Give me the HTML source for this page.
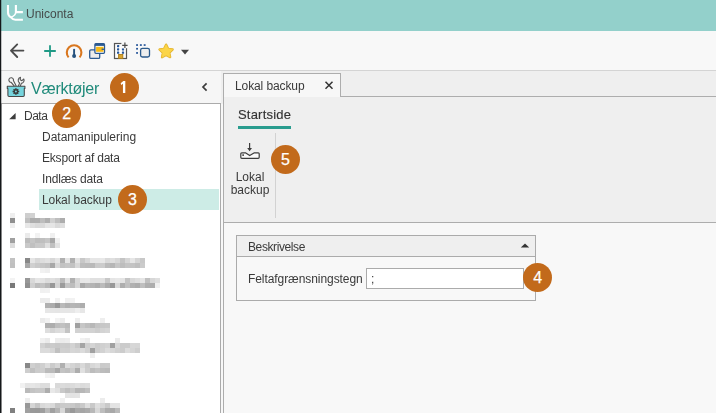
<!DOCTYPE html>
<html>
<head>
<meta charset="utf-8">
<style>
html,body{margin:0;padding:0;}
body{width:716px;height:413px;overflow:hidden;position:relative;background:#f8f8f8;font-family:"Liberation Sans",sans-serif;font-size:12px;color:#333;}
.abs{position:absolute;}
.t{will-change:transform;position:absolute;white-space:nowrap;line-height:14px;color:#3a3a3a;}
#title{left:0;top:0;width:716px;height:31px;background:#93d0cb;}
#toolbar{left:0;top:31px;width:716px;height:39px;background:#f8f8f8;}
#hdr{left:0;top:70px;width:716px;height:34px;background:#f6f6f6;border-top:1px solid #d4d4d4;box-sizing:border-box;}
#tree{left:1px;top:103px;width:220px;height:320px;background:#fff;border:1px solid #ababab;box-sizing:border-box;}
#sel{left:39px;top:189px;width:180px;height:21px;background:#cdece6;}
#right{left:223px;top:96px;width:500px;height:127px;background:#efefef;border-left:1px solid #adadad;border-top:1px solid #adadad;border-bottom:1px solid #adadad;box-sizing:border-box;}
#below{left:223px;top:223px;width:500px;height:200px;background:#f8f8f8;border-left:1px solid #adadad;box-sizing:border-box;}
#tab{left:223px;top:73px;width:118px;height:24px;background:#f7f7f7;border:1px solid #adadad;border-bottom:none;box-sizing:border-box;}
.c{-webkit-text-stroke:0.25px #fff;position:absolute;width:29.5px;height:29.5px;border-radius:50%;background:#c26a1b;color:#fff;font-size:16px;line-height:29.5px;text-align:center;}
#lb{left:0;top:0;width:1px;height:413px;background:#15181a;}
#lb2{left:1px;top:0;width:1px;height:413px;background:rgba(20,24,26,0.25);}
#grp{left:236px;top:235px;width:300px;height:66px;border:1px solid #ababab;box-sizing:border-box;background:#f8f8f8;}
#grph{left:0;top:0;width:298px;height:20px;background:#efefef;border-bottom:1px solid #ababab;}
#inp{left:366px;top:268px;width:158px;height:21px;background:#fff;border:1px solid #ababab;box-sizing:border-box;}
</style>
</head>
<body>
<div id="title" class="abs"></div>
<div id="toolbar" class="abs"></div>
<div id="hdr" class="abs"></div>
<div class="abs" style="left:221px;top:71px;width:495px;height:33px;background:#efefef;"></div>
<div id="tree" class="abs"></div>
<div id="sel" class="abs"></div>
<div id="right" class="abs"></div>
<div id="below" class="abs"></div>
<div id="tab" class="abs"></div>
<div id="lb" class="abs"></div>
<div id="lb2" class="abs"></div>

<!-- title -->
<svg class="abs" style="left:0;top:0" width="30" height="26" viewBox="0 0 30 26">
 <path d="M8 4.9 V12.6 Q8 15.8 11 17.4 Q12.8 19.7 15.4 19.7 H22.9" fill="none" stroke="#fff" stroke-width="2.1"/>
 <path d="M15.9 4.9 V12.15 H22.9" fill="none" stroke="#fff" stroke-width="2.1"/>
 <path d="M15.9 12 Q15.4 15.6 11.2 17.2" fill="none" stroke="#fff" stroke-width="1.6"/>
</svg>
<div class="t" id="tt" style="left:26px;top:7px;color:#454b4b;">Uniconta</div>

<!-- toolbar icons -->
<svg class="abs" style="left:4px;top:36px" width="26" height="30" viewBox="4 36 26 30">
 <path d="M23.4 50.6 H11.4 M17.2 44.4 L11 50.6 L17.2 57" fill="none" stroke="#4c4c4c" stroke-width="1.9" stroke-linecap="round" stroke-linejoin="round"/>
</svg>
<svg class="abs" style="left:43px;top:44px" width="14" height="14" viewBox="0 0 14 14">
 <path d="M7 1.2 V12.8 M1.2 7 H12.8" fill="none" stroke="#1f9a86" stroke-width="1.8"/>
</svg>
<svg class="abs" style="left:62px;top:38px" width="70" height="26" viewBox="62 38 70 26">
 <path d="M68.6 57.4 A7.3 7.3 0 1 1 79.6 57.4" fill="none" stroke="#d9771f" stroke-width="2.1"/>
 <path d="M74.1 49.6 V55" stroke="#26527f" stroke-width="1.9" stroke-linecap="round"/>
 <circle cx="74.1" cy="55.9" r="2" fill="#26527f"/>
 <rect x="89.7" y="49.8" width="10" height="8.6" rx="1.2" fill="#ececec" stroke="#2b5a92" stroke-width="1.3"/>
 <rect x="94.9" y="43.7" width="9.6" height="9.6" rx="1" fill="#fff" stroke="#2b5a92" stroke-width="1.3"/>
 <rect x="94.9" y="43.7" width="9.6" height="2.2" fill="#2b5a92"/>
 <rect x="96.1" y="46.8" width="7.4" height="5" fill="#f6b915"/>
 <rect x="101.6" y="48.6" width="2.6" height="1.3" fill="#2b5a92"/>
 <rect x="114.5" y="43.5" width="12" height="15" fill="#fcfcfc" stroke="#555" stroke-width="1.2"/>
 <g fill="#27569a">
  <rect x="117" y="45" width="2.2" height="2.2" rx="0.4"/>
  <rect x="117" y="48.3" width="2.2" height="2.2" rx="0.4"/><rect x="121.9" y="48.3" width="2.2" height="2.2" rx="0.4"/>
  <rect x="117" y="51.6" width="2.2" height="2.2" rx="0.4"/><rect x="121.9" y="51.6" width="2.2" height="2.2" rx="0.4"/>
 </g>
 <rect x="118.6" y="54.5" width="4.2" height="4" fill="#dba42c" stroke="#a87c1e" stroke-width="0.9"/>
 <rect x="121.4" y="41" width="7.4" height="7.2" fill="#f8f8f8"/>
 <path d="M124.9 42.6 V48 M122.2 45.3 H127.6" stroke="#4a4a4a" stroke-width="1.2" fill="none"/>
</svg>
<svg class="abs" style="left:130px;top:38px" width="50" height="26" viewBox="130 38 50 26">
 <g fill="#27569a">
  <rect x="136.1" y="44.2" width="1.9" height="1.7"/><rect x="139.9" y="44.2" width="1.9" height="1.7"/><rect x="143.7" y="44.2" width="1.9" height="1.7"/>
  <rect x="136.1" y="47.9" width="1.9" height="1.7"/><rect x="136.1" y="52.1" width="1.9" height="1.7"/>
 </g>
 <rect x="140.6" y="48.4" width="8.9" height="8.6" rx="1.8" fill="#eeeeee" stroke="#2b5a8c" stroke-width="1.3"/>
 <path d="M166.10 44.60 L168.16 48.77 L172.76 49.44 L169.43 52.68 L170.21 57.26 L166.10 55.10 L161.99 57.26 L162.77 52.68 L159.44 49.44 L164.04 48.77 Z" fill="#fbd548" stroke="#e3b431" stroke-width="2.2" stroke-linejoin="round"/>
 <path d="M166.10 44.60 L168.16 48.77 L172.76 49.44 L169.43 52.68 L170.21 57.26 L166.10 55.10 L161.99 57.26 L162.77 52.68 L159.44 49.44 L164.04 48.77 Z" fill="#fbd548" stroke="#fbd548" stroke-width="0.6" stroke-linejoin="round"/>
</svg>
<svg class="abs" style="left:180px;top:49px" width="10" height="6" viewBox="0 0 10 6">
 <path d="M1 0.8 H9 L5 5.4 Z" fill="#444"/>
</svg>

<!-- panel header -->
<svg class="abs" style="left:0;top:70px" width="32" height="32" viewBox="0 70 32 32">
 <path d="M14.3 86.2 L11.2 82.3 A2.3 2.3 0 1 1 13.4 80.6 L16.2 86" fill="#f6f6f6" stroke="#555" stroke-width="1.1" stroke-linejoin="round"/>
 <path d="M18.4 86.2 L19.6 82.9 A3.1 3.1 0 0 1 20.5 77.3 L20.2 79.7 L21.9 80.7 L23.8 79 A3.1 3.1 0 0 1 21.3 83.4 L20.3 86.2" fill="#f6f6f6" stroke="#555" stroke-width="1.1" stroke-linejoin="round"/>
 <path d="M7.3 86.3 H24.9 V88.5 H24.3 V95.3 Q24.3 96.5 23.1 96.5 H9.1 Q7.9 96.5 7.9 95.3 V88.5 H7.3 Z" fill="#76d4dd" stroke="#484848" stroke-width="1.1" stroke-linejoin="round"/>
 <g stroke="#3a3a3a" stroke-width="1.5">
  <path d="M15.9 88.2 V94.8 M12.6 91.5 H19.2 M13.57 89.17 L18.23 93.83 M18.23 89.17 L13.57 93.83"/>
 </g>
 <circle cx="15.9" cy="91.5" r="2.3" fill="#3a3a3a"/>
 <circle cx="15.9" cy="91.5" r="1.0" fill="#76d4dd"/>
</svg>
<div class="t" id="vk" style="left:31px;top:80px;font-size:16px;line-height:18px;color:#1f8a7a;letter-spacing:-0.25px;">Værktøjer</div>
<svg class="abs" style="left:200px;top:80px" width="10" height="14" viewBox="200 80 10 14">
 <path d="M206.6 83.4 L203 87 L206.6 90.6" fill="none" stroke="#3c3c3c" stroke-width="1.7"/>
</svg>

<!-- tree -->
<svg class="abs" style="left:9px;top:112px" width="8" height="8" viewBox="0 0 8 8"><path d="M6.6 0.9 V7.3 H0.2 Z" fill="#3c3c3c"/></svg>
<div class="t" id="t0" style="left:24px;top:109px;letter-spacing:-0.5px;">Data</div>
<div class="t" id="t1" style="left:42px;top:130px;">Datamanipulering</div>
<div class="t" id="t2" style="left:42px;top:151px;letter-spacing:-0.2px;">Eksport af data</div>
<div class="t" id="t3" style="left:42px;top:172px;letter-spacing:-0.18px;">Indlæs data</div>
<div class="t" id="t4" style="left:42px;top:193px;letter-spacing:-0.08px;">Lokal backup</div>

<!-- MOSAIC-START -->
<svg class="abs" style="left:0;top:0" width="230" height="413" viewBox="0 0 230 413" shape-rendering="crispEdges">
<rect x="10" y="213" width="5" height="5" fill="#efefef"/>
<rect x="25" y="213" width="5" height="5" fill="#cecece"/>
<rect x="30" y="213" width="5" height="5" fill="#d2d2d2"/>
<rect x="10" y="218" width="5" height="5" fill="#8f8f8f"/>
<rect x="10" y="223" width="5" height="5" fill="#eeeeee"/>
<rect x="25" y="218" width="5" height="5" fill="#c0c0c0"/>
<rect x="30" y="218" width="5" height="5" fill="#adadad"/>
<rect x="35" y="218" width="5" height="5" fill="#aeaeae"/>
<rect x="40" y="218" width="5" height="5" fill="#bdbdbd"/>
<rect x="45" y="218" width="5" height="5" fill="#afafaf"/>
<rect x="50" y="218" width="5" height="5" fill="#d0d0d0"/>
<rect x="55" y="218" width="5" height="5" fill="#bebebe"/>
<rect x="60" y="218" width="5" height="5" fill="#adadad"/>
<rect x="25" y="223" width="5" height="5" fill="#e8e8e8"/>
<rect x="30" y="223" width="5" height="5" fill="#dedede"/>
<rect x="35" y="223" width="5" height="5" fill="#d9d9d9"/>
<rect x="40" y="223" width="5" height="5" fill="#dadada"/>
<rect x="45" y="223" width="5" height="5" fill="#e5e5e5"/>
<rect x="50" y="223" width="5" height="5" fill="#e5e5e5"/>
<rect x="55" y="223" width="5" height="5" fill="#dadada"/>
<rect x="60" y="223" width="5" height="5" fill="#dfdfdf"/>
<rect x="25" y="233" width="5" height="5" fill="#ebebeb"/>
<rect x="35" y="233" width="5" height="5" fill="#f2f2f2"/>
<rect x="50" y="233" width="5" height="5" fill="#f0f0f0"/>
<rect x="10" y="238" width="5" height="5" fill="#a0a0a0"/>
<rect x="10" y="243" width="5" height="5" fill="#dcdcdc"/>
<rect x="25" y="238" width="5" height="5" fill="#bcbcbc"/>
<rect x="30" y="238" width="5" height="5" fill="#c5c5c5"/>
<rect x="35" y="238" width="5" height="5" fill="#bdbdbd"/>
<rect x="40" y="238" width="5" height="5" fill="#bfbfbf"/>
<rect x="45" y="238" width="5" height="5" fill="#c6c6c6"/>
<rect x="50" y="238" width="5" height="5" fill="#a8a8a8"/>
<rect x="55" y="238" width="5" height="5" fill="#f0f0f0"/>
<rect x="25" y="243" width="5" height="5" fill="#c9c9c9"/>
<rect x="30" y="243" width="5" height="5" fill="#c0c0c0"/>
<rect x="35" y="243" width="5" height="5" fill="#c9c9c9"/>
<rect x="40" y="243" width="5" height="5" fill="#c9c9c9"/>
<rect x="45" y="243" width="5" height="5" fill="#e0e0e0"/>
<rect x="50" y="243" width="5" height="5" fill="#c0c0c0"/>
<rect x="55" y="243" width="5" height="5" fill="#e2e2e2"/>
<rect x="10" y="258" width="5" height="5" fill="#c2c2c2"/>
<rect x="10" y="263" width="5" height="5" fill="#c0c0c0"/>
<rect x="25" y="258" width="5" height="5" fill="#888888"/>
<rect x="30" y="258" width="5" height="5" fill="#e5e5e5"/>
<rect x="35" y="258" width="5" height="5" fill="#d8d8d8"/>
<rect x="40" y="258" width="5" height="5" fill="#dddddd"/>
<rect x="45" y="258" width="5" height="5" fill="#e1e1e1"/>
<rect x="50" y="258" width="5" height="5" fill="#d8d8d8"/>
<rect x="55" y="258" width="5" height="5" fill="#e5e5e5"/>
<rect x="60" y="258" width="5" height="5" fill="#b0b0b0"/>
<rect x="65" y="258" width="5" height="5" fill="#e6e6e6"/>
<rect x="70" y="258" width="5" height="5" fill="#b0b0b0"/>
<rect x="75" y="258" width="5" height="5" fill="#e5e5e5"/>
<rect x="80" y="258" width="5" height="5" fill="#c8c8c8"/>
<rect x="85" y="258" width="5" height="5" fill="#d7d7d7"/>
<rect x="90" y="258" width="5" height="5" fill="#e6e6e6"/>
<rect x="95" y="258" width="5" height="5" fill="#e6e6e6"/>
<rect x="100" y="258" width="5" height="5" fill="#e8e8e8"/>
<rect x="105" y="258" width="5" height="5" fill="#dadada"/>
<rect x="110" y="258" width="5" height="5" fill="#dfdfdf"/>
<rect x="115" y="258" width="5" height="5" fill="#d7d7d7"/>
<rect x="120" y="258" width="5" height="5" fill="#c4c4c4"/>
<rect x="125" y="258" width="5" height="5" fill="#d6d6d6"/>
<rect x="130" y="258" width="5" height="5" fill="#e6e6e6"/>
<rect x="135" y="258" width="5" height="5" fill="#d5d5d5"/>
<rect x="140" y="258" width="5" height="5" fill="#c8c8c8"/>
<rect x="25" y="263" width="5" height="5" fill="#a8a8a8"/>
<rect x="30" y="263" width="5" height="5" fill="#d0d0d0"/>
<rect x="35" y="263" width="5" height="5" fill="#c9c9c9"/>
<rect x="40" y="263" width="5" height="5" fill="#c5c5c5"/>
<rect x="45" y="263" width="5" height="5" fill="#c1c1c1"/>
<rect x="50" y="263" width="5" height="5" fill="#a8a8a8"/>
<rect x="55" y="263" width="5" height="5" fill="#d8d8d8"/>
<rect x="60" y="263" width="5" height="5" fill="#c2c2c2"/>
<rect x="65" y="263" width="5" height="5" fill="#c6c6c6"/>
<rect x="70" y="263" width="5" height="5" fill="#c2c2c2"/>
<rect x="75" y="263" width="5" height="5" fill="#d8d8d8"/>
<rect x="80" y="263" width="5" height="5" fill="#bdbdbd"/>
<rect x="85" y="263" width="5" height="5" fill="#bbbbbb"/>
<rect x="90" y="263" width="5" height="5" fill="#b9b9b9"/>
<rect x="95" y="263" width="5" height="5" fill="#cacaca"/>
<rect x="100" y="263" width="5" height="5" fill="#cccccc"/>
<rect x="105" y="263" width="5" height="5" fill="#bbbbbb"/>
<rect x="110" y="263" width="5" height="5" fill="#b6b6b6"/>
<rect x="115" y="263" width="5" height="5" fill="#c6c6c6"/>
<rect x="120" y="263" width="5" height="5" fill="#bdbdbd"/>
<rect x="125" y="263" width="5" height="5" fill="#c4c4c4"/>
<rect x="130" y="263" width="5" height="5" fill="#c3c3c3"/>
<rect x="135" y="263" width="5" height="5" fill="#bebebe"/>
<rect x="140" y="263" width="5" height="5" fill="#cbcbcb"/>
<rect x="40" y="268" width="5" height="5" fill="#f1f1f1"/>
<rect x="45" y="268" width="5" height="5" fill="#eeeeee"/>
<rect x="10" y="278" width="5" height="5" fill="#f3f3f3"/>
<rect x="10" y="283" width="5" height="5" fill="#787878"/>
<rect x="25" y="278" width="5" height="5" fill="#989898"/>
<rect x="30" y="278" width="5" height="5" fill="#d9d9d9"/>
<rect x="35" y="278" width="5" height="5" fill="#e6e6e6"/>
<rect x="40" y="278" width="5" height="5" fill="#e3e3e3"/>
<rect x="45" y="278" width="5" height="5" fill="#dbdbdb"/>
<rect x="50" y="278" width="5" height="5" fill="#e0e0e0"/>
<rect x="55" y="278" width="5" height="5" fill="#dadada"/>
<rect x="60" y="278" width="5" height="5" fill="#bcbcbc"/>
<rect x="65" y="278" width="5" height="5" fill="#e3e3e3"/>
<rect x="70" y="278" width="5" height="5" fill="#b0b0b0"/>
<rect x="75" y="278" width="5" height="5" fill="#d8d8d8"/>
<rect x="80" y="278" width="5" height="5" fill="#e7e7e7"/>
<rect x="85" y="278" width="5" height="5" fill="#e8e8e8"/>
<rect x="90" y="278" width="5" height="5" fill="#e0e0e0"/>
<rect x="95" y="278" width="5" height="5" fill="#e0e0e0"/>
<rect x="100" y="278" width="5" height="5" fill="#e1e1e1"/>
<rect x="105" y="278" width="5" height="5" fill="#c8c8c8"/>
<rect x="110" y="278" width="5" height="5" fill="#e5e5e5"/>
<rect x="115" y="278" width="5" height="5" fill="#e8e8e8"/>
<rect x="120" y="278" width="5" height="5" fill="#e4e4e4"/>
<rect x="125" y="278" width="5" height="5" fill="#c4c4c4"/>
<rect x="130" y="278" width="5" height="5" fill="#d8d8d8"/>
<rect x="135" y="278" width="5" height="5" fill="#dedede"/>
<rect x="140" y="278" width="5" height="5" fill="#e5e5e5"/>
<rect x="145" y="278" width="5" height="5" fill="#c0c0c0"/>
<rect x="150" y="278" width="5" height="5" fill="#d7d7d7"/>
<rect x="155" y="278" width="5" height="5" fill="#dfdfdf"/>
<rect x="25" y="283" width="5" height="5" fill="#909090"/>
<rect x="30" y="283" width="5" height="5" fill="#d0d0d0"/>
<rect x="35" y="283" width="5" height="5" fill="#bdbdbd"/>
<rect x="40" y="283" width="5" height="5" fill="#c2c2c2"/>
<rect x="45" y="283" width="5" height="5" fill="#b6b6b6"/>
<rect x="50" y="283" width="5" height="5" fill="#989898"/>
<rect x="55" y="283" width="5" height="5" fill="#d4d4d4"/>
<rect x="60" y="283" width="5" height="5" fill="#9c9c9c"/>
<rect x="65" y="283" width="5" height="5" fill="#c4c4c4"/>
<rect x="70" y="283" width="5" height="5" fill="#bdbdbd"/>
<rect x="75" y="283" width="5" height="5" fill="#d6d6d6"/>
<rect x="80" y="283" width="5" height="5" fill="#a8a8a8"/>
<rect x="85" y="283" width="5" height="5" fill="#b6b6b6"/>
<rect x="90" y="283" width="5" height="5" fill="#b3b3b3"/>
<rect x="95" y="283" width="5" height="5" fill="#adadad"/>
<rect x="100" y="283" width="5" height="5" fill="#bbbbbb"/>
<rect x="105" y="283" width="5" height="5" fill="#ababab"/>
<rect x="110" y="283" width="5" height="5" fill="#989898"/>
<rect x="115" y="283" width="5" height="5" fill="#d8d8d8"/>
<rect x="120" y="283" width="5" height="5" fill="#aeaeae"/>
<rect x="125" y="283" width="5" height="5" fill="#c0c0c0"/>
<rect x="130" y="283" width="5" height="5" fill="#b1b1b1"/>
<rect x="135" y="283" width="5" height="5" fill="#acacac"/>
<rect x="140" y="283" width="5" height="5" fill="#bfbfbf"/>
<rect x="145" y="283" width="5" height="5" fill="#afafaf"/>
<rect x="150" y="283" width="5" height="5" fill="#adadad"/>
<rect x="155" y="283" width="5" height="5" fill="#f0f0f0"/>
<rect x="40" y="288" width="5" height="5" fill="#f0f0f0"/>
<rect x="45" y="288" width="5" height="5" fill="#f1f1f1"/>
<rect x="40" y="298" width="5" height="5" fill="#ebebeb"/>
<rect x="45" y="298" width="5" height="5" fill="#ececec"/>
<rect x="55" y="298" width="5" height="5" fill="#f1f1f1"/>
<rect x="65" y="298" width="5" height="5" fill="#f0f0f0"/>
<rect x="70" y="298" width="5" height="5" fill="#f2f2f2"/>
<rect x="45" y="303" width="5" height="5" fill="#b0b0b0"/>
<rect x="50" y="303" width="5" height="5" fill="#acacac"/>
<rect x="55" y="303" width="5" height="5" fill="#989898"/>
<rect x="60" y="303" width="5" height="5" fill="#b9b9b9"/>
<rect x="65" y="303" width="5" height="5" fill="#b0b0b0"/>
<rect x="70" y="303" width="5" height="5" fill="#b5b5b5"/>
<rect x="75" y="303" width="5" height="5" fill="#b3b3b3"/>
<rect x="80" y="303" width="5" height="5" fill="#adadad"/>
<rect x="45" y="308" width="5" height="5" fill="#e7e7e7"/>
<rect x="50" y="308" width="5" height="5" fill="#e6e6e6"/>
<rect x="55" y="308" width="5" height="5" fill="#e5e5e5"/>
<rect x="60" y="308" width="5" height="5" fill="#e6e6e6"/>
<rect x="65" y="308" width="5" height="5" fill="#e6e6e6"/>
<rect x="70" y="308" width="5" height="5" fill="#e7e7e7"/>
<rect x="75" y="308" width="5" height="5" fill="#eeeeee"/>
<rect x="80" y="308" width="5" height="5" fill="#e7e7e7"/>
<rect x="40" y="318" width="5" height="5" fill="#eaeaea"/>
<rect x="45" y="318" width="5" height="5" fill="#f1f1f1"/>
<rect x="55" y="318" width="5" height="5" fill="#f3f3f3"/>
<rect x="60" y="318" width="5" height="5" fill="#ececec"/>
<rect x="75" y="318" width="5" height="5" fill="#eeeeee"/>
<rect x="100" y="318" width="5" height="5" fill="#eeeeee"/>
<rect x="45" y="323" width="5" height="5" fill="#b0b0b0"/>
<rect x="50" y="323" width="5" height="5" fill="#adadad"/>
<rect x="55" y="323" width="5" height="5" fill="#bdbdbd"/>
<rect x="60" y="323" width="5" height="5" fill="#c1c1c1"/>
<rect x="65" y="323" width="5" height="5" fill="#bbbbbb"/>
<rect x="75" y="323" width="5" height="5" fill="#a0a0a0"/>
<rect x="80" y="323" width="5" height="5" fill="#c6c6c6"/>
<rect x="85" y="323" width="5" height="5" fill="#bebebe"/>
<rect x="90" y="323" width="5" height="5" fill="#b8b8b8"/>
<rect x="95" y="323" width="5" height="5" fill="#c4c4c4"/>
<rect x="100" y="323" width="5" height="5" fill="#c7c7c7"/>
<rect x="105" y="323" width="5" height="5" fill="#c8c8c8"/>
<rect x="45" y="328" width="5" height="5" fill="#dedede"/>
<rect x="50" y="328" width="5" height="5" fill="#d4d4d4"/>
<rect x="55" y="328" width="5" height="5" fill="#dbdbdb"/>
<rect x="60" y="328" width="5" height="5" fill="#dedede"/>
<rect x="65" y="328" width="5" height="5" fill="#c4c4c4"/>
<rect x="75" y="328" width="5" height="5" fill="#d2d2d2"/>
<rect x="80" y="328" width="5" height="5" fill="#d2d2d2"/>
<rect x="85" y="328" width="5" height="5" fill="#d2d2d2"/>
<rect x="90" y="328" width="5" height="5" fill="#d2d2d2"/>
<rect x="95" y="328" width="5" height="5" fill="#cdcdcd"/>
<rect x="100" y="328" width="5" height="5" fill="#d3d3d3"/>
<rect x="105" y="328" width="5" height="5" fill="#d6d6d6"/>
<rect x="40" y="338" width="5" height="5" fill="#f0f0f0"/>
<rect x="45" y="338" width="5" height="5" fill="#eaeaea"/>
<rect x="55" y="338" width="5" height="5" fill="#ededed"/>
<rect x="60" y="338" width="5" height="5" fill="#ebebeb"/>
<rect x="65" y="338" width="5" height="5" fill="#ededed"/>
<rect x="80" y="338" width="5" height="5" fill="#f1f1f1"/>
<rect x="85" y="338" width="5" height="5" fill="#ececec"/>
<rect x="115" y="338" width="5" height="5" fill="#ebebeb"/>
<rect x="40" y="343" width="5" height="5" fill="#d2d2d2"/>
<rect x="45" y="343" width="5" height="5" fill="#c9c9c9"/>
<rect x="50" y="343" width="5" height="5" fill="#cbcbcb"/>
<rect x="55" y="343" width="5" height="5" fill="#c8c8c8"/>
<rect x="60" y="343" width="5" height="5" fill="#cccccc"/>
<rect x="65" y="343" width="5" height="5" fill="#cbcbcb"/>
<rect x="70" y="343" width="5" height="5" fill="#d3d3d3"/>
<rect x="75" y="343" width="5" height="5" fill="#c8c8c8"/>
<rect x="80" y="343" width="5" height="5" fill="#a4a4a4"/>
<rect x="85" y="343" width="5" height="5" fill="#cecece"/>
<rect x="90" y="343" width="5" height="5" fill="#d4d4d4"/>
<rect x="95" y="343" width="5" height="5" fill="#cccccc"/>
<rect x="100" y="343" width="5" height="5" fill="#d0d0d0"/>
<rect x="105" y="343" width="5" height="5" fill="#d3d3d3"/>
<rect x="110" y="343" width="5" height="5" fill="#a0a0a0"/>
<rect x="115" y="343" width="5" height="5" fill="#d7d7d7"/>
<rect x="120" y="343" width="5" height="5" fill="#cbcbcb"/>
<rect x="125" y="343" width="5" height="5" fill="#cbcbcb"/>
<rect x="130" y="343" width="5" height="5" fill="#d7d7d7"/>
<rect x="135" y="343" width="5" height="5" fill="#d6d6d6"/>
<rect x="40" y="348" width="5" height="5" fill="#dbdbdb"/>
<rect x="45" y="348" width="5" height="5" fill="#dbdbdb"/>
<rect x="50" y="348" width="5" height="5" fill="#d5d5d5"/>
<rect x="55" y="348" width="5" height="5" fill="#c0c0c0"/>
<rect x="60" y="348" width="5" height="5" fill="#d0d0d0"/>
<rect x="65" y="348" width="5" height="5" fill="#cfcfcf"/>
<rect x="70" y="348" width="5" height="5" fill="#d6d6d6"/>
<rect x="75" y="348" width="5" height="5" fill="#d4d4d4"/>
<rect x="80" y="348" width="5" height="5" fill="#dbdbdb"/>
<rect x="85" y="348" width="5" height="5" fill="#d1d1d1"/>
<rect x="90" y="348" width="5" height="5" fill="#a0a0a0"/>
<rect x="95" y="348" width="5" height="5" fill="#cccccc"/>
<rect x="100" y="348" width="5" height="5" fill="#d2d2d2"/>
<rect x="105" y="348" width="5" height="5" fill="#dcdcdc"/>
<rect x="110" y="348" width="5" height="5" fill="#d7d7d7"/>
<rect x="115" y="348" width="5" height="5" fill="#d0d0d0"/>
<rect x="120" y="348" width="5" height="5" fill="#cccccc"/>
<rect x="125" y="348" width="5" height="5" fill="#dcdcdc"/>
<rect x="130" y="348" width="5" height="5" fill="#d5d5d5"/>
<rect x="135" y="348" width="5" height="5" fill="#cecece"/>
<rect x="90" y="353" width="5" height="5" fill="#eeeeee"/>
<rect x="25" y="363" width="5" height="5" fill="#888888"/>
<rect x="30" y="363" width="5" height="5" fill="#cfcfcf"/>
<rect x="35" y="363" width="5" height="5" fill="#c9c9c9"/>
<rect x="40" y="363" width="5" height="5" fill="#cfcfcf"/>
<rect x="45" y="363" width="5" height="5" fill="#dcdcdc"/>
<rect x="50" y="363" width="5" height="5" fill="#cbcbcb"/>
<rect x="55" y="363" width="5" height="5" fill="#d5d5d5"/>
<rect x="60" y="363" width="5" height="5" fill="#b0b0b0"/>
<rect x="65" y="363" width="5" height="5" fill="#dcdcdc"/>
<rect x="70" y="363" width="5" height="5" fill="#d4d4d4"/>
<rect x="75" y="363" width="5" height="5" fill="#cecece"/>
<rect x="80" y="363" width="5" height="5" fill="#d8d8d8"/>
<rect x="85" y="363" width="5" height="5" fill="#cbcbcb"/>
<rect x="90" y="363" width="5" height="5" fill="#d7d7d7"/>
<rect x="95" y="363" width="5" height="5" fill="#dcdcdc"/>
<rect x="100" y="363" width="5" height="5" fill="#cacaca"/>
<rect x="105" y="363" width="5" height="5" fill="#cbcbcb"/>
<rect x="25" y="368" width="5" height="5" fill="#cecece"/>
<rect x="30" y="368" width="5" height="5" fill="#c0c0c0"/>
<rect x="35" y="368" width="5" height="5" fill="#cbcbcb"/>
<rect x="40" y="368" width="5" height="5" fill="#cdcdcd"/>
<rect x="45" y="368" width="5" height="5" fill="#bbbbbb"/>
<rect x="50" y="368" width="5" height="5" fill="#bababa"/>
<rect x="55" y="368" width="5" height="5" fill="#a8a8a8"/>
<rect x="60" y="368" width="5" height="5" fill="#c3c3c3"/>
<rect x="65" y="368" width="5" height="5" fill="#bfbfbf"/>
<rect x="70" y="368" width="5" height="5" fill="#cbcbcb"/>
<rect x="75" y="368" width="5" height="5" fill="#adadad"/>
<rect x="80" y="368" width="5" height="5" fill="#e0e0e0"/>
<rect x="85" y="368" width="5" height="5" fill="#cdcdcd"/>
<rect x="90" y="368" width="5" height="5" fill="#bcbcbc"/>
<rect x="95" y="368" width="5" height="5" fill="#c3c3c3"/>
<rect x="100" y="368" width="5" height="5" fill="#bcbcbc"/>
<rect x="105" y="368" width="5" height="5" fill="#bababa"/>
<rect x="45" y="373" width="5" height="5" fill="#f3f3f3"/>
<rect x="50" y="373" width="5" height="5" fill="#efefef"/>
<rect x="20" y="383" width="5" height="5" fill="#f1f1f1"/>
<rect x="25" y="383" width="5" height="5" fill="#e4e4e4"/>
<rect x="30" y="383" width="5" height="5" fill="#e6e6e6"/>
<rect x="35" y="383" width="5" height="5" fill="#e3e3e3"/>
<rect x="40" y="383" width="5" height="5" fill="#dddddd"/>
<rect x="45" y="383" width="5" height="5" fill="#dddddd"/>
<rect x="55" y="383" width="5" height="5" fill="#d9d9d9"/>
<rect x="60" y="383" width="5" height="5" fill="#dbdbdb"/>
<rect x="65" y="383" width="5" height="5" fill="#d9d9d9"/>
<rect x="70" y="383" width="5" height="5" fill="#dbdbdb"/>
<rect x="75" y="383" width="5" height="5" fill="#dfdfdf"/>
<rect x="80" y="383" width="5" height="5" fill="#dbdbdb"/>
<rect x="85" y="383" width="5" height="5" fill="#dddddd"/>
<rect x="25" y="388" width="5" height="5" fill="#bababa"/>
<rect x="30" y="388" width="5" height="5" fill="#c3c3c3"/>
<rect x="35" y="388" width="5" height="5" fill="#c7c7c7"/>
<rect x="40" y="388" width="5" height="5" fill="#c7c7c7"/>
<rect x="45" y="388" width="5" height="5" fill="#adadad"/>
<rect x="50" y="388" width="5" height="5" fill="#e8e8e8"/>
<rect x="55" y="388" width="5" height="5" fill="#e0e0e0"/>
<rect x="60" y="388" width="5" height="5" fill="#c8c8c8"/>
<rect x="65" y="388" width="5" height="5" fill="#bfbfbf"/>
<rect x="70" y="388" width="5" height="5" fill="#c8c8c8"/>
<rect x="75" y="388" width="5" height="5" fill="#b6b6b6"/>
<rect x="80" y="388" width="5" height="5" fill="#b7b7b7"/>
<rect x="85" y="388" width="5" height="5" fill="#c0c0c0"/>
<rect x="65" y="393" width="5" height="5" fill="#e4e4e4"/>
<rect x="70" y="393" width="5" height="5" fill="#e3e3e3"/>
<rect x="75" y="393" width="5" height="5" fill="#e4e4e4"/>
<rect x="25" y="398" width="5" height="5" fill="#ededed"/>
<rect x="60" y="398" width="5" height="5" fill="#f1f1f1"/>
<rect x="100" y="398" width="5" height="5" fill="#ececec"/>
<rect x="10" y="408" width="5" height="5" fill="#808080"/>
<rect x="25" y="403" width="5" height="5" fill="#989898"/>
<rect x="30" y="403" width="5" height="5" fill="#d5d5d5"/>
<rect x="35" y="403" width="5" height="5" fill="#c5c5c5"/>
<rect x="40" y="403" width="5" height="5" fill="#d9d9d9"/>
<rect x="45" y="403" width="5" height="5" fill="#dddddd"/>
<rect x="50" y="403" width="5" height="5" fill="#d9d9d9"/>
<rect x="55" y="403" width="5" height="5" fill="#c5c5c5"/>
<rect x="60" y="403" width="5" height="5" fill="#cacaca"/>
<rect x="65" y="403" width="5" height="5" fill="#cacaca"/>
<rect x="70" y="403" width="5" height="5" fill="#c8c8c8"/>
<rect x="75" y="403" width="5" height="5" fill="#c1c1c1"/>
<rect x="80" y="403" width="5" height="5" fill="#c9c9c9"/>
<rect x="85" y="403" width="5" height="5" fill="#dddddd"/>
<rect x="90" y="403" width="5" height="5" fill="#c9c9c9"/>
<rect x="95" y="403" width="5" height="5" fill="#dedede"/>
<rect x="100" y="403" width="5" height="5" fill="#d6d6d6"/>
<rect x="105" y="403" width="5" height="5" fill="#c9c9c9"/>
<rect x="110" y="403" width="5" height="5" fill="#e3e3e3"/>
<rect x="115" y="403" width="5" height="5" fill="#e3e3e3"/>
<rect x="25" y="408" width="5" height="5" fill="#a0a0a0"/>
<rect x="30" y="408" width="5" height="5" fill="#999999"/>
<rect x="35" y="408" width="5" height="5" fill="#989898"/>
<rect x="40" y="408" width="5" height="5" fill="#9e9e9e"/>
<rect x="45" y="408" width="5" height="5" fill="#b9b9b9"/>
<rect x="50" y="408" width="5" height="5" fill="#a0a0a0"/>
<rect x="55" y="408" width="5" height="5" fill="#b3b3b3"/>
<rect x="60" y="408" width="5" height="5" fill="#d8d8d8"/>
<rect x="65" y="408" width="5" height="5" fill="#a5a5a5"/>
<rect x="70" y="408" width="5" height="5" fill="#999999"/>
<rect x="75" y="408" width="5" height="5" fill="#a8a8a8"/>
<rect x="80" y="408" width="5" height="5" fill="#a5a5a5"/>
<rect x="85" y="408" width="5" height="5" fill="#aaaaaa"/>
<rect x="90" y="408" width="5" height="5" fill="#b8b8b8"/>
<rect x="95" y="408" width="5" height="5" fill="#d8d8d8"/>
<rect x="100" y="408" width="5" height="5" fill="#bdbdbd"/>
<rect x="105" y="408" width="5" height="5" fill="#acacac"/>
<rect x="110" y="408" width="5" height="5" fill="#a8a8a8"/>
<rect x="115" y="408" width="5" height="5" fill="#bababa"/>
</svg>
<!-- MOSAIC-END -->

<!-- tab -->
<div class="t" id="tb" style="left:235px;top:79px;letter-spacing:-0.1px;">Lokal backup</div>
<svg class="abs" style="left:324px;top:80px" width="10" height="10" viewBox="0 0 10 10">
 <path d="M1.5 1.8 L8.5 8.8 M8.5 1.8 L1.5 8.8" stroke="#333" stroke-width="1.5"/>
</svg>
<div class="t" id="ss" style="left:238px;top:107px;font-size:13px;line-height:15px;color:#333;-webkit-text-stroke:0.15px #333;letter-spacing:0.2px;">Startside</div>
<div class="abs" style="left:238px;top:126px;width:53px;height:3px;background:#2a9d8f;"></div>

<!-- ribbon button -->
<svg class="abs" style="left:235px;top:138px" width="30" height="26" viewBox="235 138 30 26">
 <path d="M249.6 143 V148.6" fill="none" stroke="#3c3c3c" stroke-width="1.2"/>
 <path d="M247.2 148 H252 L249.6 151.3 Z" fill="#3c3c3c"/>
 <path d="M241.8 152.8 H245.4 L249.7 155.6 L254.4 152.8 H258.2 Q259.2 152.8 259.2 153.8 V157.3 Q259.2 158.3 258.2 158.3 H241.8 Q240.8 158.3 240.8 157.3 V153.8 Q240.8 152.8 241.8 152.8 Z" fill="#fbfbfb" stroke="#3c3c3c" stroke-width="1.2" stroke-linejoin="round"/>
 <rect x="242.3" y="154.3" width="1.7" height="1.6" fill="#444"/>
</svg>
<div class="t" id="rb1" style="left:230px;top:171px;width:40px;text-align:center;line-height:13px;white-space:normal;color:#3a3a3a;">Lokal backup</div>
<div class="abs" style="left:275px;top:133px;width:1px;height:85px;background:#d2d2d2;"></div>

<!-- group -->
<div id="grp" class="abs"><div id="grph" class="abs"></div></div>
<div class="t" id="g1" style="left:248px;top:240px;letter-spacing:-0.4px;">Beskrivelse</div>
<svg class="abs" style="left:520px;top:243px" width="10" height="5" viewBox="0 0 10 5"><path d="M0.8 4.4 L5 0.4 L9.2 4.4 Z" fill="#333"/></svg>
<div class="t" id="g2" style="left:248px;top:272px;letter-spacing:-0.07px;">Feltafgrænsningstegn</div>
<div id="inp" class="abs"></div>
<div class="t" style="left:371px;top:272px;">;</div>

<!-- circles -->
<div class="c" style="left:109.8px;top:72.6px;"></div>
<svg class="abs" style="left:110px;top:72px" width="30" height="30" viewBox="110 72 30 30"><path d="M120.7 83.3 L123.3 81.1 H125.3 V92.9 H122.95 V83.7 L121.2 85 Z" fill="#fff"/></svg>
<div class="c" style="left:51.9px;top:98.8px;">2</div>
<div class="c" style="left:117.6px;top:184.7px;">3</div>
<div class="c" style="left:522.9px;top:262.7px;">4</div>
<div class="c" style="left:270.7px;top:144.5px;">5</div>
</body>
</html>
